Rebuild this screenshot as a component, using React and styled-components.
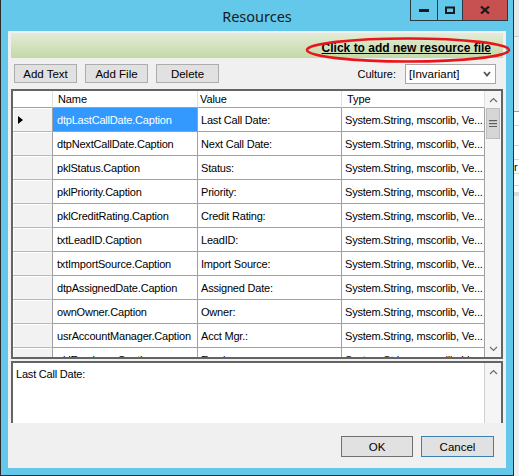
import React from "react";
import styled, { createGlobalStyle } from "styled-components";

const Global = createGlobalStyle`
  html, body { margin: 0; padding: 0; }
  body {
    width: 519px; height: 476px; overflow: hidden;
    background: #f0f0f0;
    font-family: "Liberation Sans", Arial, sans-serif;
  }
  * { box-sizing: border-box; }
`;

const Screen = styled.div`
  display: flex;
  width: 519px;
  height: 476px;
`;

const Window = styled.div`
  position: relative;
  width: 514px;
  height: 476px;
  flex: none;
  border: 1px solid #2d2d2d;
  border-top: none;
  background: #63c8ea;
  display: flex;
  flex-direction: column;
`;

const TitleBar = styled.div`
  height: 31px;
  flex: none;
  display: grid;
  grid-template-columns: 1fr auto 1fr;
`;

const Title = styled.div`
  grid-column: 2;
  align-self: start;
  padding-top: 6px;
  font-family: "Noto Sans", "Open Sans", sans-serif;
  font-size: 14.5px;
  line-height: 20px;
  color: #1a1a1a;
`;

const CaptionButtons = styled.div`
  grid-column: 3;
  justify-self: end;
  align-self: start;
  margin-right: 5px;
  display: flex;
  border: 1px solid #2b3a42;
  border-top: none;
`;

const CaptionButton = styled.div`
  width: ${(p) => p.$w}px;
  height: 20px;
  background: ${(p) => (p.$close ? "#c75050" : "#63c8ea")};
  border-left: ${(p) => (p.$first ? "none" : "1px solid #2b3a42")};
  display: flex;
  align-items: center;
  justify-content: center;
`;

const Body = styled.div`
  flex: 1;
  margin: 0 7px 7px 7px;
  background: #f0f0f0;
  display: flex;
  flex-direction: column;
  padding: 2px 3px 0 3px;
`;

const GreenBar = styled.div`
  height: 25px;
  flex: none;
  background: linear-gradient(#e3ecd7, #c4d9a7);
  display: flex;
  align-items: flex-end;
  justify-content: flex-end;
  padding: 0 12px 2px 0;
`;

const AddLink = styled.span`
  font-weight: bold;
  font-size: 12px;
  line-height: 15px;
  color: #000;
  text-decoration: underline;
`;

const Toolbar = styled.div`
  height: 31px;
  flex: none;
  display: flex;
  align-items: flex-start;
  padding: 6px 7px 0 3px;
  gap: 8px;
`;

const ToolButton = styled.div`
  width: ${(p) => p.$w || 63}px;
  height: ${(p) => p.$h || 19}px;
  background: #e1e1e1;
  border: 1px solid ${(p) => p.$border || "#adadad"};
  font-size: 11.5px;
  color: #000;
  display: flex;
  align-items: center;
  justify-content: center;
`;

const Spacer = styled.div`
  flex: 1;
`;

const CultureLabel = styled.div`
  font-size: 11px;
  height: 20px;
  line-height: 20px;
  margin-right: 1px;
`;

const Select = styled.div`
  width: 91px;
  height: 20px;
  background: #fff;
  border: 1px solid #a6a6a6;
  display: flex;
  align-items: center;
  padding: 0 4px 0 3px;
  font-size: 11.5px;
`;

const SelectText = styled.span`
  flex: 1;
`;

const Grid = styled.div`
  height: 270px;
  flex: none;
  border: 2px solid #646464;
  background: #fff;
  display: flex;
  overflow: hidden;
`;

const Table = styled.div`
  flex: 1;
  overflow: hidden;
  display: grid;
  grid-template-columns: 40px 145px 144px 143px;
  grid-auto-rows: 24px;
  grid-template-rows: 17px;
  align-content: start;
`;

const HeadCell = styled.div`
  height: 17px;
  border-bottom: 1px solid #a0a0a0;
  border-right: 1px solid #e0e0e0;
  font-size: 11px;
  letter-spacing: -0.1px;
  line-height: 16px;
  padding-left: ${(p) => p.$pad}px;
  background: #fff;
`;

const RowHead = styled.div`
  border-bottom: 1px solid #b8b8b8;
  border-right: 1px solid #a0a0a0;
  background: #f2f2f2;
  box-shadow: inset 1px 1px 0 #fff;
  display: flex;
  align-items: center;
  padding-left: 5px;
`;

const Cell = styled.div`
  border-bottom: 1px solid #a0a0a0;
  border-right: 1px solid #a0a0a0;
  background: ${(p) => (p.$selected ? "#3399ff" : "#fff")};
  color: ${(p) => (p.$selected ? "#fff" : "#000")};
  font-size: 11px;
  letter-spacing: -0.2px;
  white-space: nowrap;
  overflow: hidden;
  display: flex;
  align-items: center;
  padding-left: ${(p) => p.$pad}px;
`;

const VScroll = styled.div`
  width: ${(p) => p.$w}px;
  flex: none;
  background: #f5f5f5;
  display: flex;
  flex-direction: column;
  border-left: ${(p) => (p.$edge ? "1px solid #d0d0d0" : "none")};
`;

const ArrowBox = styled.div`
  height: 17px;
  flex: none;
  display: flex;
  align-items: center;
  justify-content: center;
`;

const Thumb = styled.div`
  height: 31px;
  flex: none;
  margin: 0 1px;
  background: #d6d6d6;
  border: 1px solid #bdbdbd;
  display: flex;
  align-items: center;
  justify-content: center;
`;

const Track = styled.div`
  flex: 1;
`;

const TextArea = styled.div`
  margin-top: 2px;
  height: 62px;
  flex: none;
  border: 2px solid #646464;
  border-bottom: none;
  background: #fff;
  display: flex;
`;

const TextContent = styled.div`
  flex: 1;
  padding: 4px 0 0 3px;
  font-size: 11px;
  letter-spacing: -0.2px;
  line-height: 14px;
`;

const ButtonBar = styled.div`
  flex: 1;
  display: flex;
  justify-content: flex-end;
  align-items: flex-start;
  padding: 13px 9px 0 0;
  gap: 8px;
`;

const Annotation = styled.svg`
  position: absolute;
  left: 304px;
  top: 37px;
  overflow: visible;
`;

const Backdrop = styled.div`
  flex: 1;
  display: flex;
  flex-direction: column;
  background: #f0f0f0;
`;

const BackBlock = styled.div`
  height: ${(p) => p.$h}px;
  flex: none;
  background: ${(p) => p.$bg};
  border-bottom: ${(p) => (p.$line ? `1px solid ${p.$line}` : "none")};
  font-size: 11px;
  line-height: ${(p) => p.$h}px;
  overflow: hidden;
`;

const Chevron = ({ up }) => (
  <svg width="9" height="6" viewBox="0 0 9 6">
    <polyline
      points={up ? "1,5 4.5,1.5 8,5" : "1,1 4.5,4.5 8,1"}
      fill="none"
      stroke="#6d6d6d"
      strokeWidth="1.2"
    />
  </svg>
);

const Grip = () => (
  <svg width="8" height="7" viewBox="0 0 8 7">
    <rect x="0" y="0" width="8" height="1.2" fill="#5f5f5f" />
    <rect x="0" y="3" width="8" height="1.2" fill="#5f5f5f" />
    <rect x="0" y="6" width="8" height="1.2" fill="#5f5f5f" />
  </svg>
);

const rows = [
  ["dtpLastCallDate.Caption", "Last Call Date:"],
  ["dtpNextCallDate.Caption", "Next Call Date:"],
  ["pklStatus.Caption", "Status:"],
  ["pklPriority.Caption", "Priority:"],
  ["pklCreditRating.Caption", "Credit Rating:"],
  ["txtLeadID.Caption", "LeadID:"],
  ["txtImportSource.Caption", "Import Source:"],
  ["dtpAssignedDate.Caption", "Assigned Date:"],
  ["ownOwner.Caption", "Owner:"],
  ["usrAccountManager.Caption", "Acct Mgr.:"],
  ["pklEmployer.Caption", "Employer:"],
];

export default function App() {
  return (
    <>
      <Global />
      <Screen>
        <Window>
          <TitleBar>
            <Title>Resources</Title>
            <CaptionButtons>
              <CaptionButton $w={26} $first>
                <svg width="10" height="3"><rect width="10" height="3" fill="#1a1a1a" /></svg>
              </CaptionButton>
              <CaptionButton $w={25}>
                <svg width="10" height="8" viewBox="0 0 10 8">
                  <rect x="1" y="1.5" width="8" height="5.5" fill="none" stroke="#1a1a1a" strokeWidth="2" />
                </svg>
              </CaptionButton>
              <CaptionButton $w={45} $close>
                <svg width="10" height="8" viewBox="0 0 10 8">
                  <path d="M1 0.5 L9 7.5 M9 0.5 L1 7.5" stroke="#1a1a1a" strokeWidth="2.2" />
                </svg>
              </CaptionButton>
            </CaptionButtons>
          </TitleBar>
          <Body>
            <GreenBar>
              <AddLink>Click to add new resource file</AddLink>
            </GreenBar>
            <Toolbar>
              <ToolButton>Add Text</ToolButton>
              <ToolButton>Add File</ToolButton>
              <ToolButton>Delete</ToolButton>
              <Spacer />
              <CultureLabel>Culture:</CultureLabel>
              <Select>
                <SelectText>[Invariant]</SelectText>
                <svg width="8" height="6" viewBox="0 0 8 6">
                  <polyline points="1,1 4,4.5 7,1" fill="none" stroke="#555" strokeWidth="1.8" />
                </svg>
              </Select>
            </Toolbar>
            <Grid>
              <Table>
                <HeadCell $pad={0} />
                <HeadCell $pad={5}>Name</HeadCell>
                <HeadCell $pad={2}>Value</HeadCell>
                <HeadCell $pad={5}>Type</HeadCell>
                {rows.map(([name, value], i) => (
                  <React.Fragment key={name}>
                    <RowHead>
                      {i === 0 && (
                        <svg width="5" height="8" viewBox="0 0 5 8">
                          <polygon points="0,0 5,4 0,8" fill="#000" />
                        </svg>
                      )}
                    </RowHead>
                    <Cell $pad={4} $selected={i === 0}>{name}</Cell>
                    <Cell $pad={3}>{value}</Cell>
                    <Cell $pad={3}>System.String, mscorlib, Ve...</Cell>
                  </React.Fragment>
                ))}
              </Table>
              <VScroll $w={16}>
                <ArrowBox><Chevron up /></ArrowBox>
                <Thumb><Grip /></Thumb>
                <Track />
                <ArrowBox><Chevron /></ArrowBox>
              </VScroll>
            </Grid>
            <TextArea>
              <TextContent>Last Call Date:</TextContent>
              <VScroll $w={17} $edge>
                <ArrowBox><Chevron up /></ArrowBox>
                <Track />
              </VScroll>
            </TextArea>
            <ButtonBar>
              <ToolButton $w={72} $h={21} $border="#707070">OK</ToolButton>
              <ToolButton $w={73} $h={21} $border="#3c7fb1">Cancel</ToolButton>
            </ButtonBar>
          </Body>
          <Annotation width="206" height="27" viewBox="0 0 206 27">
            <ellipse cx="103" cy="13" rx="101" ry="11.5" fill="none" stroke="#e8161c" strokeWidth="2.6" />
          </Annotation>
        </Window>
        <Backdrop>
          <BackBlock $h={37} $bg="#e9e9e9" $line="#c8c8c8" />
          <BackBlock $h={75} $bg="#f0f0f0" $line="#a0a0a0" />
          <BackBlock $h={14} $bg="#fff" $line="#d8d8d8" />
          <BackBlock $h={20} $bg="#fff" $line="#d8d8d8" />
          <BackBlock $h={14} $bg="#fff" $line="#d8d8d8" />
          <BackBlock $h={14} $bg="#fff" $line="#d8d8d8">r</BackBlock>
          <BackBlock $h={12} $bg="#fff" $line="#d8d8d8" />
          <BackBlock $h={6} $bg="#fff" />
          <BackBlock $h={4} $bg="#dcdcdc" />
        </Backdrop>
      </Screen>
    </>
  );
}
